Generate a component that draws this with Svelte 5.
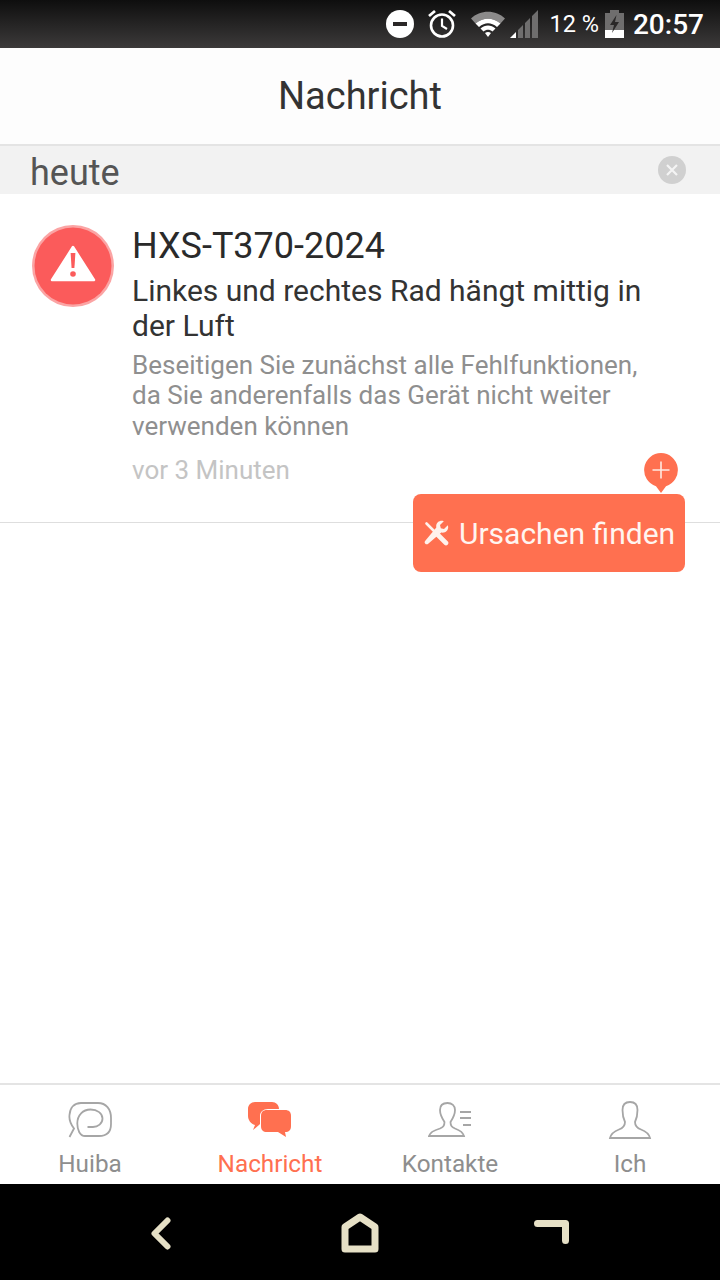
<script lang="ts">
const tabs = [
  { label: 'Huiba', icon: 'huiba' },
  { label: 'Nachricht', icon: 'chat', active: true },
  { label: 'Kontakte', icon: 'contacts' },
  { label: 'Ich', icon: 'me' },
];
</script>

<div class="screen">
  <div class="statusbar">
    <svg class="dnd" viewBox="0 0 28 28"><circle cx="14" cy="14" r="14" fill="#fff" /><rect x="7" y="12" width="14" height="4" fill="#2a2828" /></svg>
    <svg class="alarm" viewBox="0 0 30 30" fill="none" stroke="#fff">
      <circle cx="15" cy="16.500" r="11" stroke-width="2.600" />
      <path d="M15 9.500v7.500l5 3" stroke-width="2.200" />
      <path d="M2 7l6-5M28 7l-6-5" stroke-width="2.800" />
    </svg>
    <svg class="wifi" viewBox="0 0 34 26">
      <path d="M0 7.500C9-1.500 25-1.500 34 7.500L29.500 12.500C22 6 12 6 4.500 12.500Z" fill="#8b8a8a" />
      <path d="M4.500 12.500C12 6 22 6 29.500 12.500L26 16C20 11 14 11 8 16Z" fill="#fff" />
      <path d="M9.500 17.500C14 13.500 20 13.500 24.500 17.500L21.500 20.500C18.500 18 15.500 18 12.500 20.500Z" fill="#fff" />
      <path d="M14 22C16 20.500 18 20.500 20 22L17 26Z" fill="#fff" />
    </svg>
    <svg class="signal" viewBox="0 0 28 28">
      <path d="M0 28L6 22V28Z" fill="#fff" />
      <path d="M8 20L13 15V28H8ZM15 13L20 8V28H15ZM22 6L28 0V28H22Z" fill="#6f6e6e" />
    </svg>
    <span class="percent">12 %</span>
    <svg class="battery" viewBox="0 0 19 28">
      <path d="M5 0H14V3H19V28H0V3H5Z" fill="#6f6e6e" />
      <path d="M0 20H19V28H0Z" fill="#fff" />
      <path d="M11.500 5L5 15H9L7 23L14 12H10Z" fill="#2a2828" />
    </svg>
    <span class="clock">20:57</span>
  </div>

  <header class="title">Nachricht</header>

  <div class="section">
    <span class="day">heute</span>
    <svg class="clear" viewBox="0 0 28 28">
      <circle cx="14" cy="14" r="14" fill="#d0d0d0" />
      <path d="M9 9l10 10M19 9L9 19" stroke="#f4f4f4" stroke-width="2.200" />
    </svg>
  </div>

  <main class="content">
    <article class="item">
      <div class="avatar">
        <svg viewBox="0 0 82 82">
          <circle cx="41" cy="41" r="41" fill="#fba4a4" />
          <circle cx="41" cy="41" r="38.500" fill="#fb5b5b" />
          <path d="M41 22L62 55H20Z" fill="#fff" stroke="#fff" stroke-width="2.500" stroke-linejoin="round" />
          <path d="M38.600 28H43.400L42.400 43H39.600Z" fill="#fb5b5b" />
          <circle cx="41" cy="49" r="2.800" fill="#fb5b5b" />
        </svg>
      </div>
      <div class="body">
        <h2>HXS-T370-2024</h2>
        <p class="msg">Linkes und rechtes Rad hängt mittig in der Luft</p>
        <p class="desc">Beseitigen Sie zunächst alle Fehlfunktionen, da Sie anderenfalls das Gerät nicht weiter verwenden können</p>
        <div class="time">vor 3 Minuten</div>
      </div>
      <div class="plus">
        <svg viewBox="0 0 34 40">
          <path d="M17 0A17 17 0 0 1 22 33.200L17 40L12 33.200A17 17 0 0 1 17 0Z" fill="#ff7050" />
          <path d="M17 8.500V25.500M8.500 17H25.500" stroke="#ffe9e2" stroke-width="1.600" />
        </svg>
      </div>
      <button class="cause">
        <svg viewBox="0 0 26 26">
          <path d="M24.800 5.200L21 9L17.800 8.300L17 5L20.800 1.200C17 -.3 12.500 2.500 13.300 7.500L2.500 20.500C1.200 22 1.500 23 2.300 23.800C3.200 24.600 4.300 24.600 5.500 23.500L18.300 12.600C23.300 13.500 26.300 9 24.800 5.200Z" fill="#fff2ec" />
          <path d="M3.500 3.500L13 13" stroke="#fff2ec" stroke-width="2.600" stroke-linecap="round" />
          <path d="M14 14L23 23" stroke="#fff2ec" stroke-width="4.600" stroke-linecap="round" />
        </svg>
        Ursachen finden
      </button>
    </article>
  </main>

  <nav class="tabs">
    {#each tabs as tab}
      <div class="tab" class:active={tab.active}>
        <svg viewBox="0 0 44 40" fill="none" stroke="#a6a6a6" stroke-width="1.800">
          {#if tab.icon === 'huiba'}
            <path d="M1.500 36L6 27.500C2.500 23 1 18 1.500 14C2 7 6 2 13 2H30C38 2 43 8 43 17V23C43 31 38.500 35 31 35H17C12 35 9.300 29 9.300 22.500C9.300 14 15 8.500 22.500 8.500C29.500 8.500 34.500 12.500 34.500 17.500C34.500 22.500 30 26 25 26H19.500" />
          {:else if tab.icon === 'chat'}
            <path d="M7 1H24C28 1 31 4 31 8H20C15 8 12 11 12 15V23L11 24L5 29L7 24C3 23 0 19 0 15V8C0 4 3 1 7 1Z" fill="#ff7050" stroke="none" />
            <path d="M19 9H37C41 9 43 11 43 15V25C43 29 41 31 37 31L38 36L30 31H19C15 31 13 29 13 25V15C13 11 15 9 19 9Z" fill="#ff7050" stroke="none" />
          {:else if tab.icon === 'contacts'}
            <path d="M1 35H36C35 31 31 29 27 27.500C24 26 22.500 25 22.500 21C24.500 18 27 14 27 9C27 4.500 24 2 19.500 2C15 2 12 4.500 12 9C12 14 14.500 18 16.500 21C16.500 25 15 26 12 27.500C7 29 2 31 1 35Z" />
            <path d="M32 11H43M32 17H43M35 24H43" stroke-width="2.200" />
          {:else}
            <path d="M2 37H42C41 33 37 30 33 28.500C29 27 27 25 27 21C28.500 18 29.500 14 29.500 9C29.500 4 27 1 22 1C17 1 14.500 4 14.500 9C14.500 14 15.500 18 17 21C17 25 15 27 11 28.500C7 30 3 33 2 37Z" />
          {/if}
        </svg>
        <span>{tab.label}</span>
      </div>
    {/each}
  </nav>

  <div class="navbar">
    <svg class="back" viewBox="0 0 20 33" fill="none" stroke="#e6e0c6" stroke-width="6" stroke-linecap="round" stroke-linejoin="round"><path d="M16.500 3.500L3.500 16.500L16.500 29.500" /></svg>
    <svg class="home" viewBox="0 0 40 40" fill="none" stroke="#e6e0c6" stroke-width="7" stroke-linejoin="round"><path d="M20 4L35 14V36H5V14Z" /></svg>
    <svg class="recent" viewBox="0 0 35 24" fill="none" stroke="#e6e0c6" stroke-width="7" stroke-linecap="round" stroke-linejoin="round"><path d="M3.500 3.500H31.500V20.500" /></svg>
  </div>
</div>

<style>
  :global(body) {
    margin: 0;
  }
  .screen {
    width: 720px;
    height: 1280px;
    display: flex;
    flex-direction: column;
    background: #fff;
    font-family: Roboto, "Noto Sans", sans-serif;
    overflow: hidden;
  }

  .statusbar {
    height: 48px;
    flex: none;
    box-sizing: border-box;
    padding-right: 16px;
    display: flex;
    align-items: center;
    justify-content: flex-end;
    background: linear-gradient(#0e0e0e, #3c3a3a);
    color: #fff;
  }
  .dnd {
    width: 28px;
    height: 28px;
    margin-right: 13px;
  }
  .alarm {
    width: 30px;
    height: 30px;
    margin-right: 14px;
  }
  .wifi {
    width: 34px;
    height: 26px;
    margin-right: 5px;
  }
  .signal {
    width: 28px;
    height: 28px;
    margin-right: 11px;
  }
  .percent {
    font-size: 23.500px;
    margin-right: 6px;
  }
  .battery {
    width: 19px;
    height: 28px;
    margin-right: 9px;
  }
  .clock {
    font-size: 28px;
    font-weight: 500;
  }

  .title {
    height: 98px;
    flex: none;
    box-sizing: border-box;
    display: flex;
    align-items: center;
    justify-content: center;
    background: #fdfdfd;
    border-bottom: 2px solid #e4e4e4;
    font-size: 38px;
    color: #333;
  }

  .section {
    height: 48px;
    flex: none;
    box-sizing: border-box;
    padding: 0 34px 0 30px;
    display: flex;
    align-items: center;
    justify-content: space-between;
    background: #f2f2f2;
    font-size: 36px;
    color: #555;
  }
  .day {
    margin-top: 6px;
  }
  .clear {
    width: 28px;
    height: 28px;
  }

  .content {
    flex: 1;
  }
  .item {
    position: relative;
    box-sizing: border-box;
    height: 329px;
    padding: 31px 56px 0 32px;
    display: flex;
    gap: 18px;
    border-bottom: 1px solid #dedede;
  }
  .avatar {
    flex: none;
    width: 82px;
    height: 82px;
  }
  .avatar svg {
    display: block;
  }
  .body {
    flex: 1;
    min-width: 0;
  }
  h2 {
    margin: 0;
    font-size: 36px;
    font-weight: 400;
    line-height: 42px;
    color: #2a2a2a;
  }
  .msg {
    margin: 6px 0 0;
    font-size: 30px;
    line-height: 35px;
    color: #333;
  }
  .desc {
    margin: 6.500px 0 0;
    font-size: 26px;
    line-height: 30.500px;
    color: #8f8f8f;
  }
  .time {
    margin-top: 13.500px;
    font-size: 26px;
    line-height: 30px;
    color: #c4c4c4;
  }
  .plus {
    position: absolute;
    left: 644px;
    top: 259px;
    width: 34px;
    height: 40px;
  }
  .plus svg {
    display: block;
  }
  .cause {
    position: absolute;
    left: 413px;
    top: 300px;
    width: 272px;
    height: 78px;
    padding: 0 0 0 10px;
    display: flex;
    align-items: center;
    gap: 10px;
    border: none;
    border-radius: 8px;
    background: #ff7050;
    color: #fff5f0;
    font-family: inherit;
    font-size: 30px;
    white-space: nowrap;
  }
  .cause svg {
    width: 26px;
    height: 26px;
    flex: none;
  }

  .tabs {
    height: 101px;
    flex: none;
    box-sizing: border-box;
    display: flex;
    border-top: 2px solid #e4e4e4;
    background: #fff;
  }
  .tab {
    flex: 1;
    display: flex;
    flex-direction: column;
    align-items: center;
    padding-top: 16px;
    box-sizing: border-box;
    color: #8e8e8e;
    font-size: 24.300px;
    line-height: 30px;
  }
  .tab svg {
    width: 44px;
    height: 40px;
    margin-bottom: 8px;
  }
  .tab.active {
    color: #ff7050;
  }

  .navbar {
    height: 96px;
    flex: none;
    background: #000;
    position: relative;
  }
  .navbar svg {
    position: absolute;
  }
  .back {
    left: 151px;
    top: 33px;
    width: 20px;
    height: 33px;
  }
  .home {
    left: 340px;
    top: 29px;
    width: 40px;
    height: 40px;
  }
  .recent {
    left: 534px;
    top: 36px;
    width: 35px;
    height: 24px;
  }
</style>
